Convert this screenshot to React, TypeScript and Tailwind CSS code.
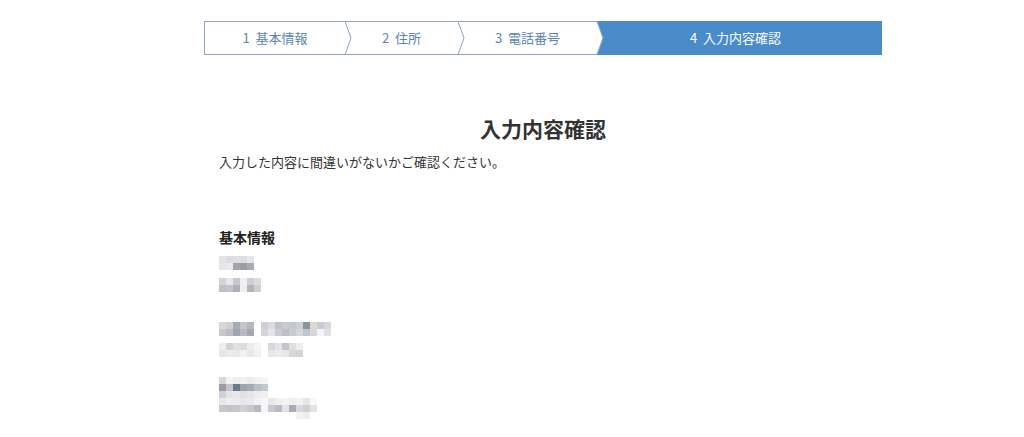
import React from "react";

const steps = [
  { label: "1 基本情報", width: "w-[141px]" },
  { label: "2 住所", width: "w-[113px]" },
  { label: "3 電話番号", width: "w-[139px]" },
];

type Row = string[];

// mosaic blocks hiding personal data, cells of 7px
function Mosaic({ rows }: { rows: Row[] }) {
  return (
    <div className="flex flex-col">
      {rows.map((row, i) => (
        <div key={i} className="flex">
          {row.map((c, j) => (
            <div key={j} className="h-[7px] w-[7px]" style={{ backgroundColor: c }} />
          ))}
        </div>
      ))}
    </div>
  );
}

const T = "transparent";

const block1a: Row[] = [
  ["#e4e4e6", "#dcdcdf", "#e0e0e3", "#dcdde0", "#e6e6e8", T],
  ["#e6e6e8", "#ececee", "#a0a4ac", "#9a9ea6", "#a8acb4", T],
];
const block1b: Row[] = [
  ["#d4d4d8", "#e8e8ea", "#c8c8d0", "#f0f0f0", "#d0d0d4", "#dcdce0"],
  ["#c0c0c6", "#c4c4ca", "#b0b0ba", "#eeeeee", "#b4b4bc", "#d0d0d4"],
];
const block2a: Row[] = [
  ["#d8d8dc", "#d0d0d4", "#a8acb4", "#c4c4ca", "#b4b8c0", T, "#d0d0d4", "#dcdcdf", "#c0c4ca", "#c8ccd0", "#c4c8cc", "#d0d0d4", "#8c949e", "#dcd8d0", "#c8ccd4", "#d8d8dc"],
  ["#c8c8cc", "#bcbcc4", "#a0a4ae", "#b8b8c0", "#a4a8b0", T, "#d4d4d8", "#e4e4e6", "#c8ccd0", "#bcc0c8", "#c8ccd0", "#d4d8dc", "#c0c4cc", "#d8d8dc", "#f4f4f6", "#e0e0e4"],
];
const block2b: Row[] = [
  ["#eeeeef", "#d4d4d8", "#e0e0e2", "#d8dde0", "#ececee", "#f4f4f4", T, "#d8d8dc", "#e4e4e6", "#c4c4ca", "#e0e0e2", "#eeeeee"],
  ["#e6e6e8", "#ececee", "#e8e8ea", "#f2f2f2", "#e8e8ea", "#f0f0f0", T, "#e8e8ea", "#ececee", "#e8e8ea", "#d8d8dc", "#d4d4d8"],
];
const block3a: Row[] = [
  ["#d8d8dc", "#f4f4f4", "#eeeeee", "#f0f0f0", "#ececee", "#f2f2f2", "#f6f6f6"],
  ["#9c9ca6", "#c4c4c8", "#6c7890", "#a0a4b0", "#a8a8b4", "#b8c0c4", "#c4c8cc"],
  ["#d0d0d4", "#e4e4e6", "#e8e8ea", "#e0e0e2", "#e6e6e8", "#ececee", "#eeeeee"],
];
const block3b: Row[] = [
  ["#e8e8ea", "#eeeeee", "#ececee", "#e8e8ea", "#eaeaec", "#f2f2f2", "#f6f6f6", "#e8e8ea", "#f0f0f0", "#f4f4f4", "#eeeeee", "#f2f2f2", "#e6e6e8", "#f8f8f8"],
  ["#c8c8cc", "#c4c4c8", "#c8c8cc", "#d0d0d4", "#c8c8cc", "#b8b8c0", "#f6f6f6", "#c8c8ce", "#b8bcc4", "#e4e4e6", "#a8acb4", "#d8d8dc", "#d0d0d4", "#e4e4e6"],
  [T, T, T, T, T, T, T, T, T, T, T, "#f2f2f2", "#eeeeee", T],
];

export default function App() {
  return (
    <div className="min-h-[437px] w-full bg-white font-['Noto_Sans_CJK_JP','Noto_Sans',sans-serif] text-[#333]">
      <div className="ml-[204px] w-[678px] pt-[21px]">
        {/* Stepper */}
        <div className="flex h-[34px]">
          {steps.map((s, i) => (
            <div
              key={s.label}
              className={`relative flex h-[34px] items-center justify-center border-y border-[#8ea3b8] bg-white text-[13px] text-[#5b86b3] ${s.width} ${i === 0 ? "border-l" : ""}`}
            >
              <span className="whitespace-pre">{s.label.replace(" ", "  ")}</span>
              <svg
                className="absolute left-full top-[-1px] z-10 h-[34px] w-[7px] overflow-visible"
                viewBox="0 0 7 34"
              >
                <polygon points="0,0 6,17 0,34" fill="#ffffff" />
                <polyline points="0,0.5 6,17 0,33.5" fill="none" stroke="#8ea3b8" strokeWidth="1" />
              </svg>
            </div>
          ))}
          <div className="flex h-[34px] w-[285px] items-center justify-center whitespace-pre bg-[#4a8bc9] pr-[8px] text-[13px] text-white">
            4  入力内容確認
          </div>
        </div>

        {/* Title */}
        <h1 className="mt-[58px] text-center text-[21px] font-bold leading-[30px] text-[#333]">
          入力内容確認
        </h1>
        <p className="ml-[15px] mt-[9px] text-[13px] leading-[20px]">
          入力した内容に間違いがないかご確認ください。
        </p>

        {/* Basic info */}
        <div className="ml-[15px] mt-[54px]">
          <h2 className="text-[14px] font-bold leading-[22px] text-[#222]">基本情報</h2>
          <div className="mt-[8px] flex flex-col gap-[8px]">
            <Mosaic rows={block1a} />
            <Mosaic rows={block1b} />
          </div>
          <div className="mt-[30px] flex flex-col gap-[7px]">
            <Mosaic rows={block2a} />
            <Mosaic rows={block2b} />
          </div>
          <div className="mt-[20px] flex flex-col">
            <Mosaic rows={block3a} />
            <Mosaic rows={block3b} />
          </div>
        </div>
      </div>
    </div>
  );
}
